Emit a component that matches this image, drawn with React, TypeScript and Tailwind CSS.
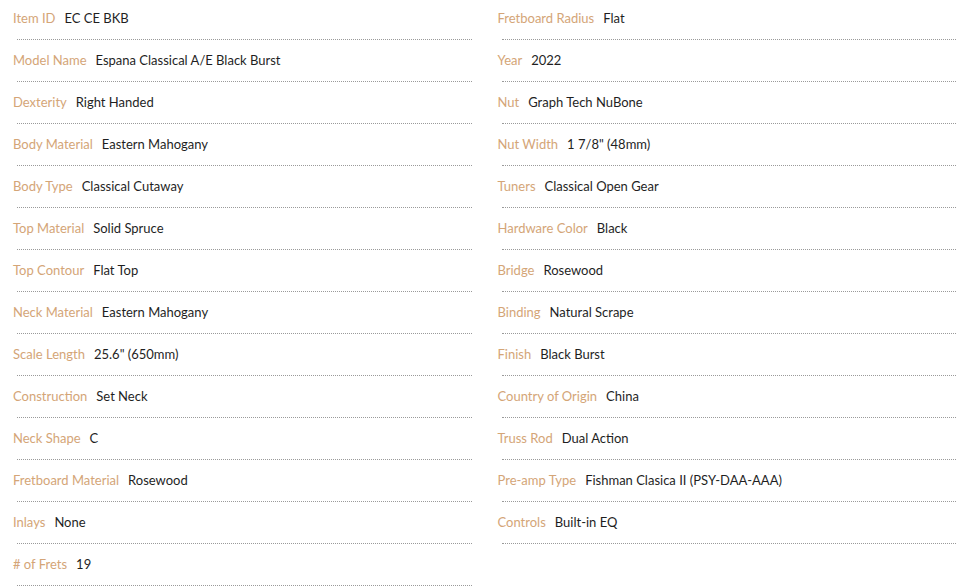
const left: [string, string][] = [
  ["Item ID", "EC CE BKB"],
  ["Model Name", "Espana Classical A/E Black Burst"],
  ["Dexterity", "Right Handed"],
  ["Body Material", "Eastern Mahogany"],
  ["Body Type", "Classical Cutaway"],
  ["Top Material", "Solid Spruce"],
  ["Top Contour", "Flat Top"],
  ["Neck Material", "Eastern Mahogany"],
  ["Scale Length", "25.6\" (650mm)"],
  ["Construction", "Set Neck"],
  ["Neck Shape", "C"],
  ["Fretboard Material", "Rosewood"],
  ["Inlays", "None"],
  ["# of Frets", "19"],
];
const right: [string, string][] = [
  ["Fretboard Radius", "Flat"],
  ["Year", "2022"],
  ["Nut", "Graph Tech NuBone"],
  ["Nut Width", "1 7/8\" (48mm)"],
  ["Tuners", "Classical Open Gear"],
  ["Hardware Color", "Black"],
  ["Bridge", "Rosewood"],
  ["Binding", "Natural Scrape"],
  ["Finish", "Black Burst"],
  ["Country of Origin", "China"],
  ["Truss Rod", "Dual Action"],
  ["Pre-amp Type", "Fishman Clasica II (PSY-DAA-AAA)"],
  ["Controls", "Built-in EQ"],
];

function Col({ items }: { items: [string, string][] }) {
  return (
    <div className="flex flex-col">
      {items.map(([k, v]) => (
        <div key={k} className="h-[42px] flex flex-col">
          <div className="h-[39px] flex items-center text-[13px] leading-[20px] pb-[4px]">
            <span className="text-[#d4a577]">{k}</span>
            <span className="ml-[9px] text-[#1f1f1f]">{v}</span>
          </div>
          <div className="ml-1 border-b border-dotted border-[#9a9a9a]" />
        </div>
      ))}
    </div>
  );
}

export default function App() {
  return (
    <div
      className="w-[980px] h-[587px] overflow-hidden bg-white pl-[13px] pr-[24px] grid grid-cols-2 gap-x-[26px]"
      style={{ fontFamily: 'Lato, "Noto Sans", sans-serif' }}
    >
      <Col items={left} />
      <Col items={right} />
    </div>
  );
}
